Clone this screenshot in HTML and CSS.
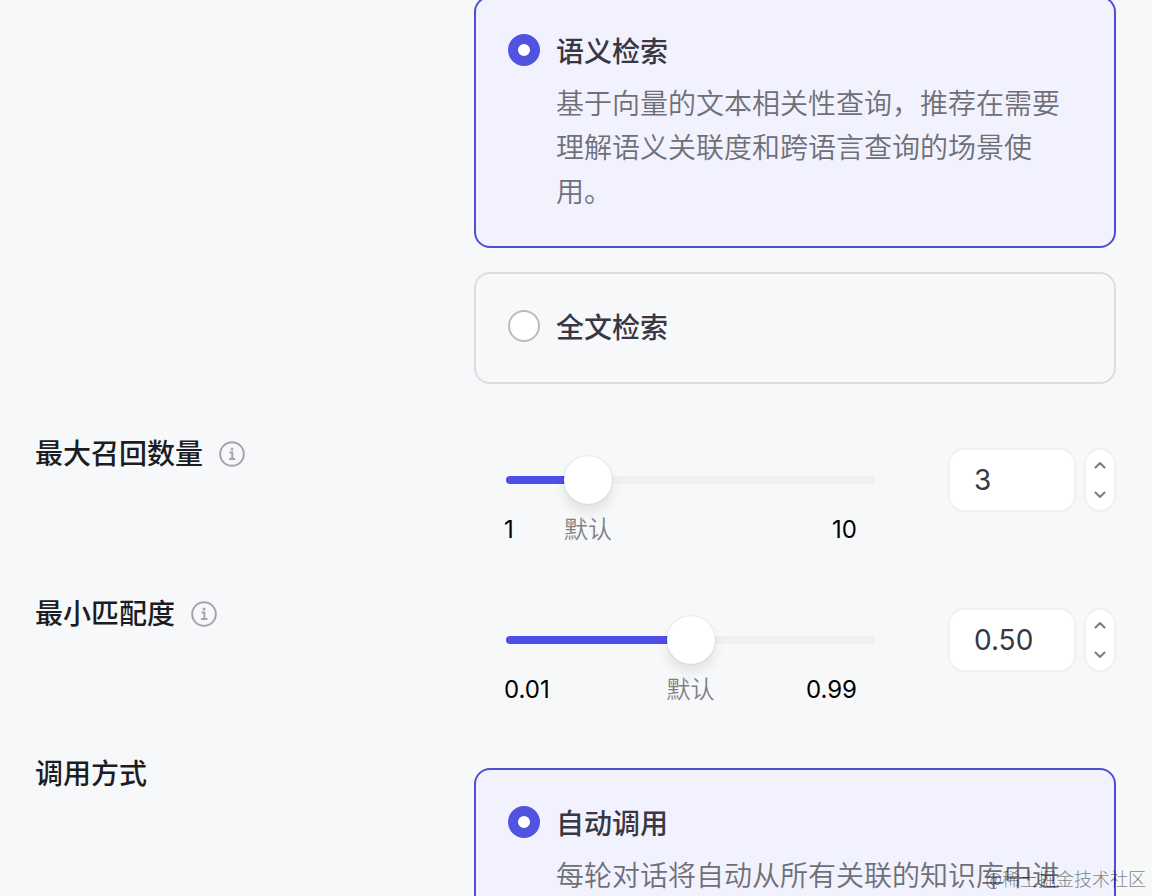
FILE: index.html
```html
<!DOCTYPE html>
<html lang="zh-CN">
<head>
<meta charset="utf-8">
<meta name="viewport" content="width=device-width, initial-scale=1">
<title>检索设置</title>
<link rel="stylesheet" href="styles.css">
</head>
<body>
<form class="settings">
  <section class="row">
    <div class="field cards">
      <label class="card card-selected">
        <input class="radio" type="radio" name="search" checked>
        <span class="card-body">
          <span class="card-title">语义检索</span>
          <span class="card-desc">基于向量的文本相关性查询，推荐在需要理解语义关联度和跨语言查询的场景使用。</span>
        </span>
      </label>
      <label class="card">
        <input class="radio" type="radio" name="search">
        <span class="card-body"><span class="card-title">全文检索</span></span>
      </label>
    </div>
  </section>

  <section class="row">
    <div class="row-label">
      <label for="recall">最大召回数量</label>
      <svg class="info" viewBox="0 0 26 26" aria-hidden="true"><circle cx="13" cy="13" r="11.8"/><path d="M10.5 11.5h2.8v6.3M10 18h6.4"/><circle class="info-dot" cx="13" cy="8" r="1.5"/></svg>
    </div>
    <div class="field control">
      <div class="slider">
        <div class="track-area">
          <div class="track"><div class="fill" style="width:22.2%"></div></div>
          <input class="range" type="range" min="1" max="10" step="1" value="3" aria-label="最大召回数量">
        </div>
        <span class="default" style="left:22.2%">默认</span>
        <div class="marks"><span>1</span><span>10</span></div>
      </div>
      <input class="number" id="recall" type="text" inputmode="numeric" value="3">
      <div class="stepper">
        <button class="step" type="button" aria-label="增加"><svg viewBox="0 0 12 8"><path d="M1.5 6.5 6 2l4.5 4.5"/></svg></button>
        <button class="step" type="button" aria-label="减少"><svg viewBox="0 0 12 8"><path d="M1.5 1.5 6 6l4.5-4.5"/></svg></button>
      </div>
    </div>
  </section>

  <section class="row">
    <div class="row-label">
      <label for="match">最小匹配度</label>
      <svg class="info" viewBox="0 0 26 26" aria-hidden="true"><circle cx="13" cy="13" r="11.8"/><path d="M10.5 11.5h2.8v6.3M10 18h6.4"/><circle class="info-dot" cx="13" cy="8" r="1.5"/></svg>
    </div>
    <div class="field control">
      <div class="slider">
        <div class="track-area">
          <div class="track"><div class="fill" style="width:50%"></div></div>
          <input class="range" type="range" min="0.01" max="0.99" step="0.01" value="0.50" aria-label="最小匹配度">
        </div>
        <span class="default" style="left:50%">默认</span>
        <div class="marks"><span>0.01</span><span>0.99</span></div>
      </div>
      <input class="number" id="match" type="text" inputmode="decimal" value="0.50">
      <div class="stepper">
        <button class="step" type="button" aria-label="增加"><svg viewBox="0 0 12 8"><path d="M1.5 6.5 6 2l4.5 4.5"/></svg></button>
        <button class="step" type="button" aria-label="减少"><svg viewBox="0 0 12 8"><path d="M1.5 1.5 6 6l4.5-4.5"/></svg></button>
      </div>
    </div>
  </section>

  <section class="row">
    <div class="row-label"><span>调用方式</span></div>
    <div class="field cards">
      <label class="card card-selected">
        <input class="radio" type="radio" name="call" checked>
        <span class="card-body">
          <span class="card-title">自动调用</span>
          <span class="card-desc">每轮对话将自动从所有关联的知识库中进</span>
        </span>
      </label>
    </div>
  </section>
</form>
<div class="watermark">@稀土掘金技术社区</div>
</body>
</html>
```
FILE: styles.css
```css
* { box-sizing: border-box; }

body {
  position: relative;
  height: 100vh;
  margin: 0;
  overflow: hidden;
  background: #f7f8fa;
  color: #1c1d23;
  font: 400 28px/44px Inter, "Noto Sans CJK SC", sans-serif;
}

/* The form is scrolled slightly past the first card's top edge. */
.settings {
  display: flex;
  flex-direction: column;
  gap: 48px;
  margin-top: -20px;
  padding: 0 36px 0 35px;
}

.row {
  display: grid;
  grid-template-columns: 439px 1fr;
}

.row-label {
  display: flex;
  align-items: center;
  align-self: start;
  gap: 16px;
  font-weight: 500;
}

.info {
  width: 26px;
  height: 26px;
  fill: none;
  stroke: #a5a5a9;
  stroke-width: 2;
}

.info-dot { fill: #a5a5a9; stroke: none; }

.field {
  grid-column: 2;
  padding-top: 16px;
}

.cards {
  display: flex;
  flex-direction: column;
  gap: 24px;
}

.card {
  display: flex;
  gap: 16px;
  padding: 32px;
  border: 2px solid #dddde0;
  border-radius: 16px;
}

.card-selected {
  border-color: #4e50d2;
  background: #f1f2fd;
}

.radio {
  flex: none;
  width: 32px;
  height: 32px;
  margin: 4px 0 0;
  appearance: none;
  border: 2px solid #bcbcbe;
  border-radius: 50%;
  background: #fff;
}

.radio:checked { border: 10px solid #4f53e0; }

.card-body {
  display: flex;
  flex-direction: column;
  gap: 8px;
}

.card-title { color: #383743; font-weight: 500; }
.card-desc { color: #6f6f78; font-weight: 350; }

.control {
  display: grid;
  grid-template-columns: 1fr 128px 32px;
  align-items: start;
  gap: 8px;
}

.slider {
  position: relative;
  height: 96px;
  margin: 0 65px 0 32px;
}

.track-area {
  display: flex;
  align-items: center;
  height: 64px;
}

.track {
  flex: 1;
  height: 8px;
  border-radius: 4px;
  background: #f0f0f2;
}

.fill {
  height: 8px;
  border-radius: 4px;
  background: #4f4fe6;
}

/* Half a thumb wider on each side, so its centre reaches both track ends. */
.range {
  position: absolute;
  left: -24px;
  width: calc(100% + 48px);
  height: 48px;
  margin: 0;
  appearance: none;
  background: transparent;
}

.range::-webkit-slider-thumb {
  width: 48px;
  height: 48px;
  appearance: none;
  border-radius: 50%;
  background: #fff;
  box-shadow: 0 8px 12px rgba(0, 0, 0, 0.09), 0 0 2px rgba(0, 0, 0, 0.16);
}

.marks {
  display: flex;
  justify-content: space-between;
  margin: 0 18px 0 -2px;
  color: #000;
  font-size: 24px;
  line-height: 36px;
}

.default {
  position: absolute;
  top: 64px;
  color: #808085;
  font-size: 24px;
  font-weight: 350;
  line-height: 36px;
  transform: translateX(-50%);
}

.number {
  width: 100%;
  height: 64px;
  padding: 0 24px;
  border: 2px solid #f0f0f2;
  border-radius: 16px;
  background: #fff;
  color: #383743;
  font: inherit;
}

.stepper {
  display: flex;
  flex-direction: column;
  height: 64px;
  overflow: hidden;
  border: 2px solid #f0f0f2;
  border-radius: 16px;
  background: #fff;
}

.step {
  display: flex;
  flex: 1;
  align-items: center;
  justify-content: center;
  padding: 0;
  border: 0;
  background: transparent;
}

.step svg {
  width: 12px;
  height: 8px;
  fill: none;
  stroke: #7b7b80;
  stroke-width: 2;
  stroke-linecap: round;
  stroke-linejoin: round;
}

.watermark {
  position: absolute;
  right: 6px;
  bottom: 5px;
  color: rgba(0, 0, 0, 0.5);
  font: 300 18px/26px "Noto Sans CJK SC", sans-serif;
}
```
